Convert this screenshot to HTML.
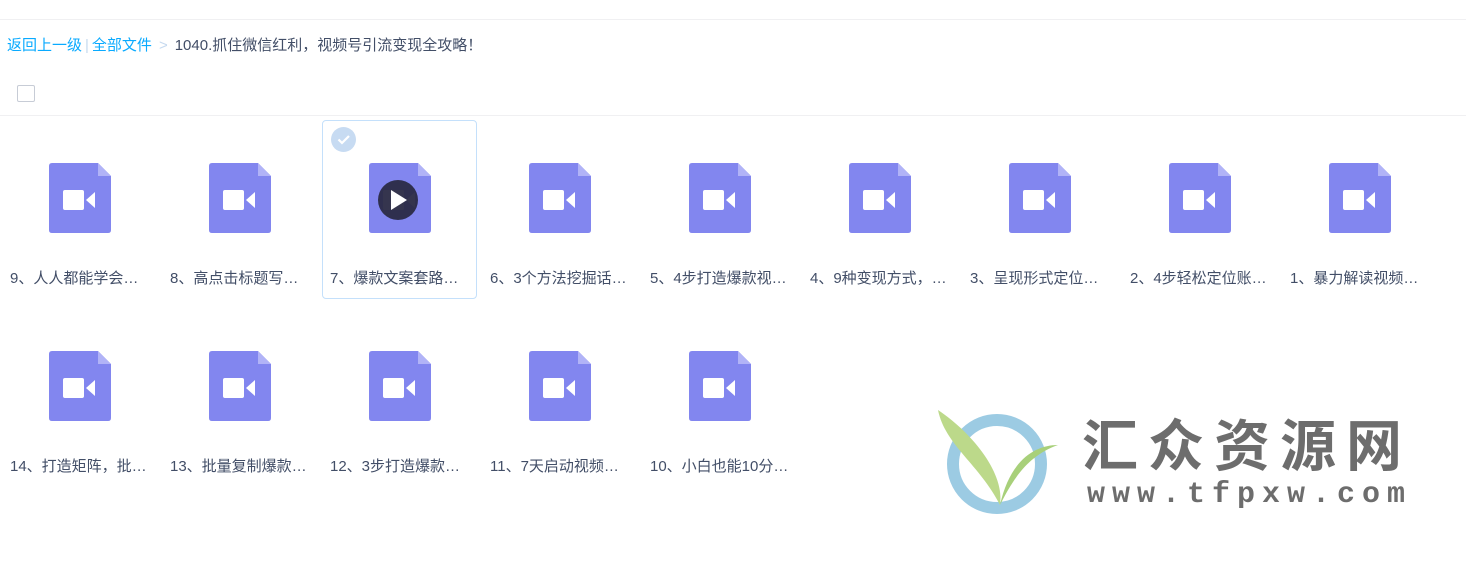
<!DOCTYPE html>
<html><head><meta charset="utf-8"><style>
*{margin:0;padding:0;box-sizing:border-box}
body{width:1466px;height:563px;background:#fff;font-family:"Liberation Sans","Noto Sans CJK SC",sans-serif;position:relative;overflow:hidden}
.topline{position:absolute;left:0;right:0;top:19px;border-top:1px solid #f0f0f2}
.crumb{position:absolute;left:7px;top:34px;font-size:15px;color:#424e67;white-space:nowrap}
.crumb a{color:#09aaff;text-decoration:none}
.crumb .sep{color:#c5d9ef}
.cb{position:absolute;left:17px;top:85px;width:18px;height:17px;border:1px solid #c7ccd6;border-radius:2px}
.line2{position:absolute;left:0;right:0;top:115px;border-top:1px solid #f0f0f2}
.item{position:absolute;width:160px;height:180px}
.ico{position:absolute;left:49px;top:43px;width:62px;height:70px}
.lab{position:absolute;left:10px;top:147px;font-size:15px;color:#424e67;white-space:nowrap}
.sel{position:absolute;left:322px;top:120px;width:155px;height:179px;border:1px solid #c4e0fb;border-radius:4px}
.chk{position:absolute;left:331px;top:127px;width:25px;height:25px;border-radius:50%;background:#c7dbf2}
.wm{position:absolute;left:1082px;top:402px;font-size:56px;font-weight:bold;color:#6d6d6d;letter-spacing:10px;font-family:"Noto Sans CJK SC",sans-serif}
.wm2{position:absolute;left:1087px;top:478px;font-size:30px;font-weight:bold;color:#6d6d6d;letter-spacing:7px;font-family:"Liberation Mono",monospace}
</style></head><body>
<svg width="0" height="0" style="position:absolute"><defs>
<g id="v"><path d="M3 0H49L62 13V67Q62 70 59 70H3Q0 70 0 67V3Q0 0 3 0Z" fill="#8286ef"/><path d="M49 0L62 13H49Z" fill="#b1b3f7"/><rect x="14" y="27" width="21" height="20" rx="2" fill="#fff"/><path d="M37 37L46 29V45Z" fill="#fff"/></g>
</defs></svg>
<div class="topline"></div>
<div class="crumb"><a>返回上一级</a><span class="sep" style="margin:0 3px">|</span><a>全部文件</a><span class="sep" style="margin:0 7px">&gt;</span>1040.抓住微信红利，视频号引流变现全攻略！</div>
<div class="cb"></div>
<div class="line2"></div>
<div class="sel"></div>
<div class="chk"><svg width="25" height="25"><path d="M7.5 12.5L11 16L18 9" stroke="#fff" stroke-width="2.2" fill="none"/></svg></div>

<div class="item" style="left:0;top:120px"><svg class="ico"><use href="#v"/></svg><div class="lab">9、人人都能学会…</div></div>
<div class="item" style="left:160px;top:120px"><svg class="ico"><use href="#v"/></svg><div class="lab">8、高点击标题写…</div></div>
<div class="item" style="left:320px;top:120px"><svg class="ico"><use href="#v"/><circle cx="29" cy="37" r="20" fill="#2a2a45" opacity=".95"/><path d="M22 27L38 37L22 47Z" fill="#fff"/></svg><div class="lab">7、爆款文案套路…</div></div>
<div class="item" style="left:480px;top:120px"><svg class="ico"><use href="#v"/></svg><div class="lab">6、3个方法挖掘话…</div></div>
<div class="item" style="left:640px;top:120px"><svg class="ico"><use href="#v"/></svg><div class="lab">5、4步打造爆款视…</div></div>
<div class="item" style="left:800px;top:120px"><svg class="ico"><use href="#v"/></svg><div class="lab">4、9种变现方式，…</div></div>
<div class="item" style="left:960px;top:120px"><svg class="ico"><use href="#v"/></svg><div class="lab">3、呈现形式定位…</div></div>
<div class="item" style="left:1120px;top:120px"><svg class="ico"><use href="#v"/></svg><div class="lab">2、4步轻松定位账…</div></div>
<div class="item" style="left:1280px;top:120px"><svg class="ico"><use href="#v"/></svg><div class="lab">1、暴力解读视频…</div></div>

<div class="item" style="left:0;top:308px"><svg class="ico"><use href="#v"/></svg><div class="lab">14、打造矩阵，批…</div></div>
<div class="item" style="left:160px;top:308px"><svg class="ico"><use href="#v"/></svg><div class="lab">13、批量复制爆款…</div></div>
<div class="item" style="left:320px;top:308px"><svg class="ico"><use href="#v"/></svg><div class="lab">12、3步打造爆款…</div></div>
<div class="item" style="left:480px;top:308px"><svg class="ico"><use href="#v"/></svg><div class="lab">11、7天启动视频…</div></div>
<div class="item" style="left:640px;top:308px"><svg class="ico"><use href="#v"/></svg><div class="lab">10、小白也能10分…</div></div>

<svg style="position:absolute;left:930px;top:405px" width="135" height="115">
<circle cx="67" cy="59" r="44" fill="none" stroke="#9ccbe3" stroke-width="12"/>
<path d="M8 5C15 40 50 60 70 100C75 70 45 30 8 5Z" fill="#bcd98a"/>
<path d="M70 100C85 70 100 50 128 40C105 40 80 55 70 100Z" fill="#a8d07a"/>
</svg>
<div class="wm">汇众资源网</div>
<div class="wm2">www.tfpxw.com</div>
</body></html>
